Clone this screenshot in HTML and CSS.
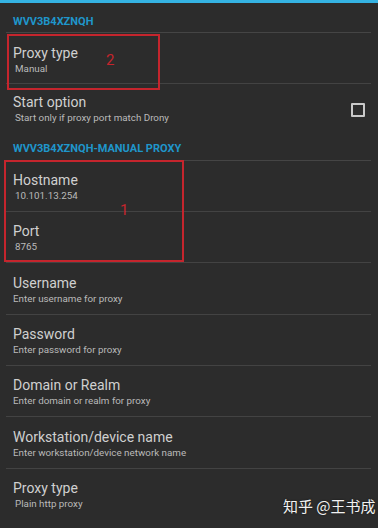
FILE: index.html
```html
<!DOCTYPE html>
<html lang="en">
<head>
    <meta charset="UTF-8">
    <meta name="viewport" content="width=device-width, initial-scale=1.0">
    <title>Drony proxy settings</title>
    <link rel="stylesheet" href="styles.css">
</head>
<body>
    <div class="topbar"></div>

    <div class="prefs">
        <div class="category">WVV3B4XZNQH</div>

        <div class="marked">
            <div class="pref">
                <div class="pref-title">Proxy type</div>
                <div class="pref-summary value">Manual</div>
            </div>
            <div class="mark mark-type"><span class="mark-num">2</span></div>
        </div>

        <div class="pref pref-check">
            <div class="pref-text">
                <div class="pref-title">Start option</div>
                <div class="pref-summary value">Start only if proxy port match Drony</div>
            </div>
            <span class="checkbox"></span>
        </div>

        <div class="category category-tight">WVV3B4XZNQH-MANUAL PROXY</div>

        <!-- host + port are circled in the screenshot -->
        <div class="marked">
            <div class="pref">
                <div class="pref-title">Hostname</div>
                <div class="pref-summary value">10.101.13.254</div>
            </div>
            <div class="pref">
                <div class="pref-title">Port</div>
                <div class="pref-summary value">8765</div>
            </div>
            <div class="mark mark-host"><span class="mark-num">1</span></div>
        </div>

        <div class="pref">
            <div class="pref-title">Username</div>
            <div class="pref-summary">Enter username for proxy</div>
        </div>
        <div class="pref">
            <div class="pref-title">Password</div>
            <div class="pref-summary">Enter password for proxy</div>
        </div>
        <div class="pref">
            <div class="pref-title">Domain or Realm</div>
            <div class="pref-summary">Enter domain or realm for proxy</div>
        </div>
        <div class="pref">
            <div class="pref-title">Workstation/device name</div>
            <div class="pref-summary">Enter workstation/device network name</div>
        </div>
        <div class="pref pref-last">
            <div class="pref-title">Proxy type</div>
            <div class="pref-summary value">Plain http proxy</div>
        </div>
    </div>

    <div class="watermark">知乎 @王书成</div>
</body>
</html>
```

FILE: styles.css
```css
body {
    margin: 0;
    padding: 0;
    height: 528px;
    overflow: hidden;
    position: relative;
    background-color: #2c2c2c;
    font-family: Roboto, "Noto Sans", sans-serif;
}

.topbar {
    height: 3px;
    background-color: #35b3e3;
}

.prefs {
    padding: 5px 7px 0 6px;
}

.category {
    padding: 6.5px 7px 4.5px;
    font-size: 11px;
    line-height: 13px;
    font-weight: bold;
    color: #1f96cb;
    border-bottom: 1px solid #454545;
}

.category-tight {
    padding-top: 6.5px;
}

.pref {
    box-sizing: border-box;
    height: 51.33px;
    padding: 11.5px 7px 0;
    border-bottom: 1px solid #434343;
}

.pref-title {
    font-size: 14px;
    line-height: 16px;
    color: #d0d0d0;
}

.pref-summary {
    margin-top: 2px;
    font-size: 9.8px;
    line-height: 12px;
    color: #bababa;
}

.pref-summary.value {
    padding-left: 2px;
}

.pref-check {
    display: flex;
    align-items: center;
    justify-content: space-between;
    padding: 0 6px 0 7px;
    border-bottom: none;
}

.pref-check .pref-text {
    margin-top: -1px;
}

.pref-last {
    border-bottom: none;
}

.checkbox {
    width: 10px;
    height: 10px;
    border: 2px solid #c9c9c9;
    border-radius: 1px;
}

/* red annotation boxes drawn over the list */
.marked {
    position: relative;
}

.mark {
    position: absolute;
    border: 2px solid #c5252d;
}

.mark-type {
    left: 1px;
    top: 1px;
    width: 149px;
    height: 52px;
}

.mark-host {
    left: -2px;
    top: -1px;
    width: 176px;
    height: 98px;
}

.mark-num {
    position: absolute;
    font-size: 15px;
    line-height: 15px;
    color: #c5252d;
}

.mark-type .mark-num {
    left: 97px;
    top: 17px;
}

.mark-host .mark-num {
    left: 114px;
    top: 41px;
}

.watermark {
    position: absolute;
    left: 283px;
    top: 496px;
    font-family: "Noto Sans CJK SC", sans-serif;
    font-size: 15px;
    line-height: 20px;
    color: #f2f2f2;
    text-shadow: 0 0 2px rgba(0, 0, 0, 0.6);
}
```
